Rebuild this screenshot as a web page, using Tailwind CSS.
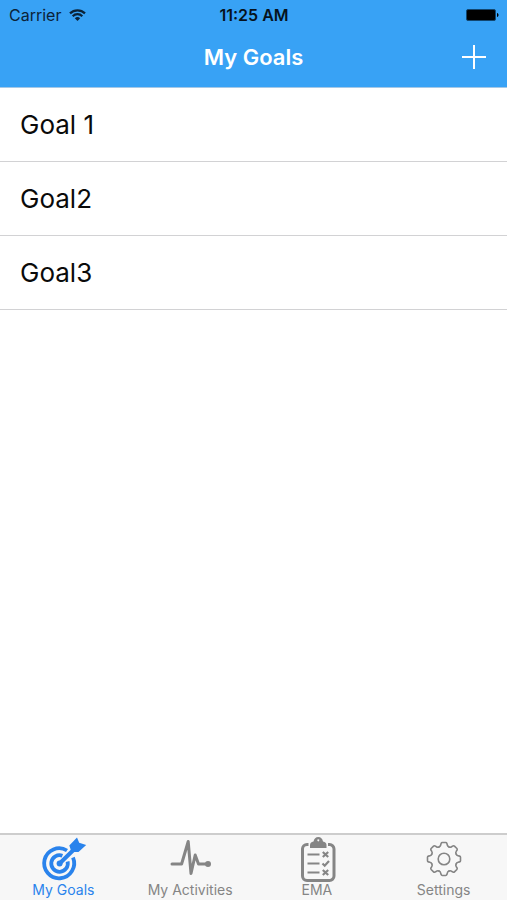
<!DOCTYPE html>
<html lang="en">
<head>
<meta charset="utf-8">
<meta name="viewport" content="width=device-width, initial-scale=1">
<title>My Goals</title>
<script src="https://cdn.jsdelivr.net/npm/@tailwindcss/browser@4"></script>
</head>
<body class="min-h-screen flex flex-col bg-white font-['Inter','Liberation_Sans',sans-serif] text-black">
<header class="bg-[#38a2f5] border-b border-[#a5c8e6]">
  <div class="grid grid-cols-3 items-center h-[30px] pl-[9px] pr-2 text-[#0b2338]">
    <div class="flex items-center gap-2 text-base">
      <span>Carrier</span>
      <svg class="w-[17px] h-3" viewBox="0 0 17 12" fill="none" stroke="#0b2338" stroke-width="2.200" aria-label="Wi-Fi">
        <path d="M1 4.400a10.600 10.600 0 0 1 15 0M3.700 7.200a6.800 6.800 0 0 1 9.600 0"/>
        <path d="M8.500 12 5.800 9.300a3.800 3.800 0 0 1 5.400 0z" fill="#0b2338" stroke="none"/>
      </svg>
    </div>
    <div class="text-center text-base font-semibold text-[#06121d] whitespace-nowrap">11:25 AM</div>
    <svg class="justify-self-end w-[33px] h-3" viewBox="0 0 33 12" aria-label="Battery full">
      <rect x=".5" y=".5" width="29" height="11" rx="1.500" fill="#000" stroke="#12466f"/>
      <path d="M31 4c2 .5 2 3.500 0 4z" fill="#000"/>
    </svg>
  </div>
  <div class="grid grid-cols-[1fr_auto_1fr] items-center h-[57px] px-5 pb-1">
    <h1 class="col-start-2 pt-0.5 text-[22px] font-semibold text-white">My Goals</h1>
    <button type="button" aria-label="Add goal" class="justify-self-end">
      <svg class="w-[26px] h-[26px]" viewBox="0 0 26 26" stroke="#fff" stroke-width="2"><path d="M1 13h24M13 1v24"/></svg>
    </button>
  </div>
</header>
<main class="flex-1">
  <ul class="text-[26px] leading-[73px] text-[#0a0a0a]">
    <li class="border-b border-[#d2d2d4]"><a href="#goal-1" class="block px-5">Goal 1</a></li>
    <li class="border-b border-[#d2d2d4]"><a href="#goal-2" class="block px-5">Goal2</a></li>
    <li class="border-b border-[#d2d2d4]"><a href="#goal-3" class="block px-5">Goal3</a></li>
  </ul>
</main>
<nav class="grid grid-cols-4 border-t-2 border-[#cdcdcd] bg-[#f7f7f7] pt-0.5 pb-px text-sm leading-[18px] text-[#858585]">
  <a href="#goals" aria-current="page" class="flex flex-col items-center text-[#2a83ec]">
    <svg class="w-12 h-11" viewBox="0 0 48 44" fill="none" stroke="currentColor" stroke-width="3.800">
      <path d="M28 13.500A15 15 0 1 0 34 20.500"/>
      <path d="M23.400 18.700A8.300 8.300 0 1 0 28.600 24.500"/>
      <path d="M20.600 26.500 37 10.500" stroke-width="4" stroke-linecap="round"/>
      <path d="M30.300 8.500 38 .5 40.200 5.800 47.200 8 39.500 15 32.500 15z" fill="currentColor" stroke="none"/>
      <circle cx="20.600" cy="26.500" r="3" fill="currentColor" stroke="none"/>
    </svg>
    <span>My Goals</span>
  </a>
  <a href="#activities" class="flex flex-col items-center">
    <svg class="w-12 h-11" viewBox="0 0 48 44" fill="none" stroke="currentColor" stroke-width="3" stroke-linecap="round" stroke-linejoin="round">
      <path d="M6 27H15.600L22.200 4.500 25 36.500 29.200 18 32.500 27H42"/>
      <circle cx="42" cy="27" r="3" fill="currentColor" stroke="none"/>
    </svg>
    <span>My Activities</span>
  </a>
  <a href="#ema" class="flex flex-col items-center">
    <svg class="w-12 h-11 overflow-visible" viewBox="0 0 48 44" fill="none" stroke="currentColor" stroke-width="3">
      <path d="M15.500 7.500H14a4.500 4.500 0 0 0-4.500 4.500V39a4.500 4.500 0 0 0 4.500 4.500H36.500A4.500 4.500 0 0 0 41 39V12a4.500 4.500 0 0 0-4.500-4.500H35"/>
      <path fill-rule="evenodd" d="M17 11V8Q17 5 20.500 4.500 21.500 0 25.300 0T30 4.500Q33.500 5 33.500 8V11zM25.300 2.200a1 1 0 1 0 .01 0z" fill="currentColor" stroke="none"/>
      <path d="M14.500 17.500h12M14.500 26.500h12M14.500 35.500h12" stroke-width="2.200"/>
      <path d="M29.800 15l5.400 5m0-5-5.400 5M29.500 26.500l2.200 2.200 4.300-4.700M29.800 33l5.400 5m0-5-5.400 5" stroke-width="2.200"/>
    </svg>
    <span>EMA</span>
  </a>
  <a href="#settings" class="flex flex-col items-center">
    <svg class="w-12 h-11" viewBox="-24 -22 48 44" fill="none" stroke="currentColor" stroke-width="1.600" stroke-linecap="round">
      <defs><path id="tooth" d="M-5-12.100Q-3.600-12.600-3.300-14L-2.900-15.600Q-2.600-16.500-1.700-16.500H1.700Q2.600-16.500 2.900-15.600L3.300-14Q3.600-12.600 5-12.100"/></defs>
      <use href="#tooth"/><use href="#tooth" transform="rotate(45)"/><use href="#tooth" transform="rotate(90)"/><use href="#tooth" transform="rotate(135)"/><use href="#tooth" transform="rotate(180)"/><use href="#tooth" transform="rotate(225)"/><use href="#tooth" transform="rotate(270)"/><use href="#tooth" transform="rotate(315)"/>
      <circle r="5.800"/>
    </svg>
    <span>Settings</span>
  </a>
</nav>
</body>
</html>
